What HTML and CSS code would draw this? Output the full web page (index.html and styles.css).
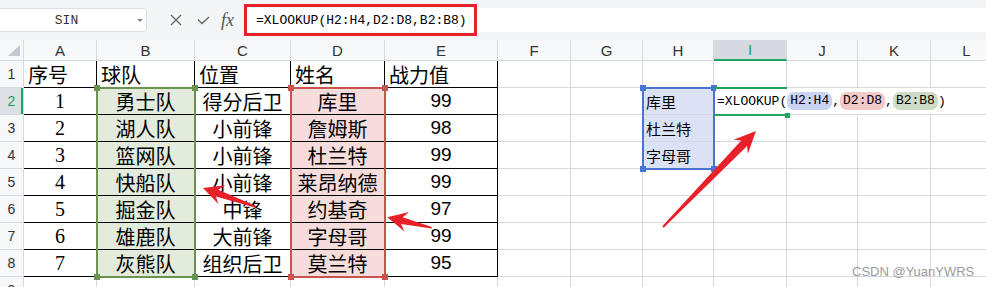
FILE: index.html
```html
<!DOCTYPE html>
<html lang="zh-CN">
<head>
    <meta charset="UTF-8">
    <meta name="viewport" content="width=device-width, initial-scale=1.0">
    <title>XLOOKUP 示例</title>
    <link rel="stylesheet" href="styles.css">
</head>
<body>
    <div class="app">
        <!-- Formula Bar -->
        <div class="toolbar">
            <div class="namebox"><span class="name">SIN</span><span class="drop"></span></div>
            <svg class="icon-x" width="12" height="12" viewBox="0 0 12 12">
                <path d="M1 1 L11 11 M11 1 L1 11" stroke="#666" stroke-width="1.3" fill="none"/>
            </svg>
            <svg class="icon-ok" width="13" height="9" viewBox="0 0 13 9">
                <path d="M1 3.5 L5 7.5 L12 1" stroke="#666" stroke-width="1.3" fill="none"/>
            </svg>
            <span class="fx">fx</span>
            <div class="formula">
                <span class="ftext">=XLOOKUP(H2:H4,D2:D8,B2:B8)</span>
            </div>
        </div>

        <!-- Sheet -->
        <div class="sheet" id="sheet"></div>

        <!-- Annotation Arrows -->
        <svg class="arrows" width="986" height="287" viewBox="0 0 986 287">
            <polygon points="256.3,206.2 218.3,189.8 225.2,185.3 203,188 218.4,204.1 215.9,196.4 255.7,207.8"/>
            <polygon points="431.9,226.9 402.7,217.3 409.1,212.1 387.3,217.3 404.5,231.5 401.1,224.1 431.5,228.5"/>
            <polygon points="663.7,227.7 747.1,146.0 747.9,153.8 756,131 733.5,139.8 741.3,140.4 662.3,226.3"/>
        </svg>

        <div class="mark">CSDN @YuanYWRS</div>
    </div>

    <script>
        const sheet = document.getElementById('sheet');
        const letters = ['A', 'B', 'C', 'D', 'E', 'F', 'G', 'H', 'I', 'J', 'K', 'L'];
        const table = [
            ['序号', '球队', '位置', '姓名', '战力值'],
            ['1', '勇士队', '得分后卫', '库里', '99'],
            ['2', '湖人队', '小前锋', '詹姆斯', '98'],
            ['3', '篮网队', '小前锋', '杜兰特', '99'],
            ['4', '快船队', '小前锋', '莱昂纳德', '99'],
            ['5', '掘金队', '中锋', '约基奇', '97'],
            ['6', '雄鹿队', '大前锋', '字母哥', '99'],
            ['7', '灰熊队', '组织后卫', '莫兰特', '95']
        ];
        const lookup = ['库里', '杜兰特', '字母哥'];

        function addCell(row, col, cls, text) {
            const el = document.createElement('div');
            el.className = cls;
            el.style.gridRow = row;
            el.style.gridColumn = col;
            if (text) el.textContent = text;
            sheet.appendChild(el);
            return el;
        }

        // headers
        addCell(1, 1, 'corner');
        letters.forEach((l, i) => {
            addCell(1, i + 2, 'colhead' + (l === 'I' ? ' active' : ''), l);
        });

        // rows
        for (let r = 1; r <= 9; r++) {
            addCell(r + 1, 1, 'rowhead' + (r === 2 ? ' active' : ''), String(r));
            for (let c = 1; c <= 12; c++) {
                let cls = 'cell';
                let text = '';
                if (r <= 8 && c <= 5) {
                    cls += ' tb';
                    text = table[r - 1][c - 1];
                    if (r === 1) cls += ' head';
                    else {
                        cls += ' mid';
                        if (c === 1) cls += ' serif';
                        if (c === 5) cls += ' num';
                        if (c === 2) cls += ' fill-g';
                        if (c === 4) cls += ' fill-r';
                    }
                }
                if (c === 8 && r >= 2 && r <= 4) {
                    cls += ' fill-b lk';
                    text = lookup[r - 2];
                }
                addCell(r + 1, c + 1, cls, text);
            }
        }

        // reference ranges
        function addRange(rows, col, cls) {
            const el = addCell(rows, col, 'range ' + cls);
            el.innerHTML = '<span class="tl"></span><span class="tr"></span><span class="bl"></span><span class="br"></span>';
        }
        addRange('3 / 10', 3, 'g');
        addRange('3 / 10', 5, 'r');
        addRange('3 / 6', 9, 'b');

        // cell being edited
        const edit = addCell(3, '10 / 14', 'edit');
        edit.innerHTML = '=XLOOKUP(<span class="pill p-b">H2:H4</span>,<span class="pill p-r">D2:D8</span>,<span class="pill p-g">B2:B8</span>)';
        addCell(3, 10, 'active-cell');
    </script>
</body>
</html>
```

FILE: styles.css
```css
body {
    margin: 0;
    background: #fff;
    overflow: hidden;
    font-family: "Liberation Sans", "Noto Sans CJK SC", sans-serif;
}

.app {
    position: relative;
    width: 986px;
    height: 287px;
    overflow: hidden;
}

/* Formula Bar */
.toolbar {
    display: flex;
    align-items: center;
    height: 40px;
    background: #f4f5f7;
}

.namebox {
    position: relative;
    display: flex;
    align-items: center;
    justify-content: center;
    box-sizing: border-box;
    width: 151px;
    height: 24px;
    margin-left: -4px;
    padding-right: 10px;
    background: #fff;
    border: 1px solid #dcdfe4;
    border-radius: 4px;
}

.name {
    font: 13px "Liberation Mono", monospace;
    color: #333;
}

.drop {
    position: absolute;
    right: 3px;
    top: 10px;
    border-left: 3px solid transparent;
    border-right: 3px solid transparent;
    border-top: 3px solid #888;
}

.icon-x {
    margin-left: 23px;
}

.icon-ok {
    margin-left: 15px;
}

.fx {
    margin-left: 11px;
    font: italic 18px "Liberation Serif", serif;
    color: #555;
}

.formula {
    flex: 1;
    display: flex;
    align-items: center;
    height: 24px;
    margin-left: 10px;
    background: #fff;
}

.ftext {
    display: flex;
    align-items: center;
    box-sizing: border-box;
    flex: none;
    width: 233px;
    height: 32px;
    padding-left: 9px;
    border: 3px solid #e4222b;
    font: 13px "Liberation Mono", monospace;
    color: #000;
}

/* Sheet */
.sheet {
    display: grid;
    grid-template-columns: 24px 73px 98px 96px 94px 113px 73px 72px 71px 73px 71px 73px 72px;
    grid-template-rows: 21px repeat(9, 27px);
}

.corner,
.colhead,
.rowhead {
    display: flex;
    align-items: center;
    justify-content: center;
    box-sizing: border-box;
    background: #f7f8fa;
    border-right: 1px solid #d6d9df;
    border-bottom: 1px solid #d6d9df;
    color: #333;
}

.corner {
    position: relative;
}

.corner::after {
    content: "";
    position: absolute;
    right: 3px;
    bottom: 4px;
    border-left: 12px solid transparent;
    border-bottom: 11px solid #c5c9d0;
}

.colhead {
    font-size: 15px;
}

.colhead.active {
    background: #d6d9df;
    color: #1f9d5c;
    border-bottom: 2px solid #21a366;
}

.rowhead {
    font-size: 14px;
}

.rowhead.active {
    background: #dcdfe4;
    color: #1f9d5c;
    box-shadow: inset -2px 0 #21a366;
}

.cell {
    display: flex;
    align-items: center;
    box-sizing: border-box;
    overflow: hidden;
    white-space: nowrap;
    border-right: 1px solid #d4d8e0;
    border-bottom: 1px solid #d4d8e0;
    font-family: "Noto Sans CJK SC", sans-serif;
    font-size: 20px;
    color: #000;
}

.cell.tb {
    border-color: #000;
}

.cell.head {
    padding-left: 4px;
}

.cell.mid {
    justify-content: center;
}

.cell.serif {
    font-family: "Liberation Serif", serif;
}

.cell.num {
    font-family: "Liberation Sans", sans-serif;
    font-size: 19px;
}

.fill-g {
    background: #e3ebdc;
}

.fill-r {
    background: #f6dddc;
}

.fill-b {
    background: #dce2f5;
}

.cell.lk {
    font-size: 15px;
    padding-left: 3px;
}

/* Reference ranges */
.range {
    position: relative;
    z-index: 2;
    box-sizing: border-box;
    margin: -1px -1px -1px -1px;
    border: 2px solid currentColor;
    pointer-events: none;
}

.range.g {
    color: #6b9350;
}

.range.r {
    color: #c9534f;
}

.range.b {
    color: #4a74cf;
}

.range span {
    position: absolute;
    width: 6px;
    height: 6px;
    background: currentColor;
}

.range .tl { left: -4px; top: -4px; }
.range .tr { right: -4px; top: -4px; }
.range .bl { left: -4px; bottom: -4px; }
.range .br { right: -4px; bottom: -4px; }

/* Editing cell */
.edit {
    z-index: 3;
    display: flex;
    align-items: center;
    margin: 0 0 1px 2px;
    padding-left: 1px;
    background: #fff;
    white-space: nowrap;
    font: 13px "Liberation Mono", monospace;
    color: #000;
}

.pill {
    padding: 0 3px;
    line-height: 18px;
    border-radius: 7px;
}

.p-b {
    background: #c8d4f1;
}

.p-r {
    background: #f1c9c9;
}

.p-g {
    background: #cfdcc5;
}

.active-cell {
    position: relative;
    z-index: 4;
    margin: -1px 0 -1px 0;
    border-top: 2px solid #21a366;
    border-bottom: 2px solid #21a366;
    pointer-events: none;
}

.active-cell::after {
    content: "";
    position: absolute;
    right: -3px;
    bottom: -4px;
    width: 5px;
    height: 5px;
    background: #21a366;
}

/* Annotations */
.arrows {
    position: absolute;
    left: 0;
    top: 0;
    z-index: 10;
    pointer-events: none;
}

.arrows polygon {
    fill: #e8202a;
}

.mark {
    position: absolute;
    left: 852px;
    top: 264px;
    z-index: 11;
    font: 13px "Liberation Sans", sans-serif;
    color: #9c9c9c;
}
```
